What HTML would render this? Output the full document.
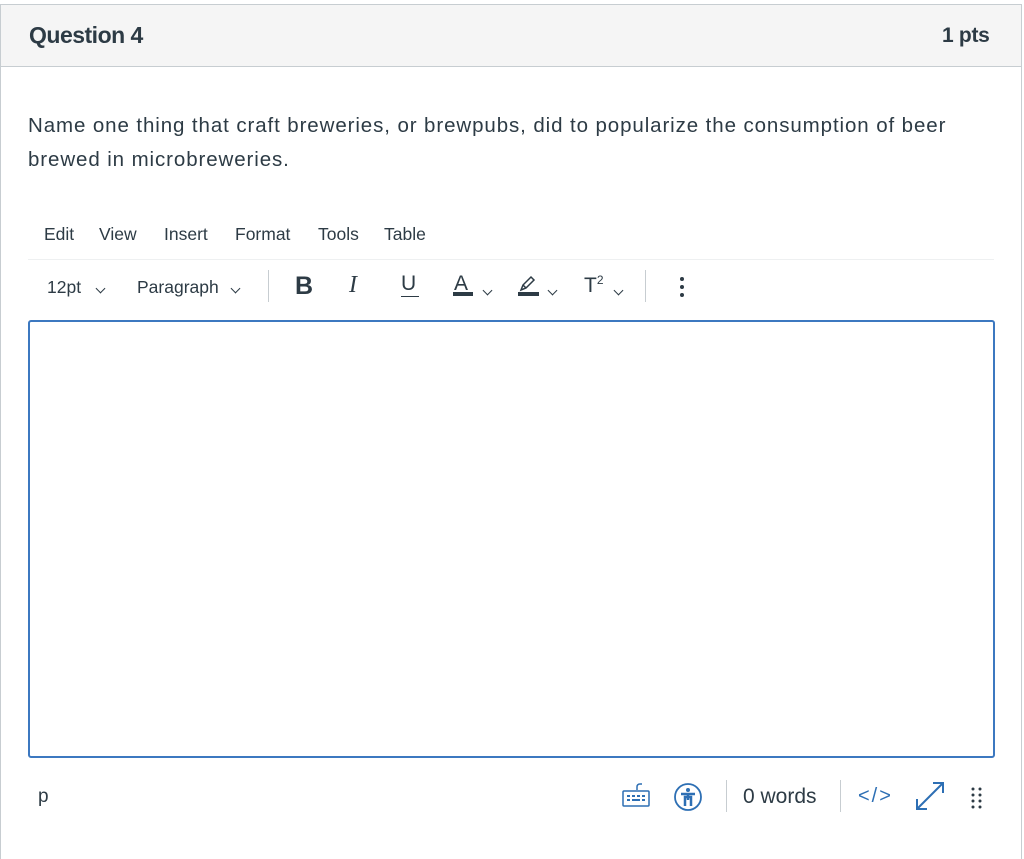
<!DOCTYPE html>
<html><head><meta charset="utf-8"><style>
*{margin:0;padding:0;box-sizing:border-box}
body{width:1024px;height:859px;background:#fff;font-family:"Liberation Sans",sans-serif;color:#2d3b45;position:relative;overflow:hidden}
.a{position:absolute;white-space:nowrap}
.chev{display:inline-block;width:7px;height:7px;border-right:1px solid #2d3b45;border-bottom:1px solid #2d3b45;transform:rotate(45deg);}
</style></head><body>
<div class="a" style="left:0;top:4px;width:1022px;height:855px;border:1px solid #c7cdd1;border-bottom:none"></div>
<div class="a" style="left:1px;top:5px;width:1020px;height:62px;background:#f5f5f5;border-bottom:1px solid #c7cdd1"></div>
<div class="a" style="left:29px;top:22px;font-size:23px;font-weight:bold;letter-spacing:-0.5px">Question 4</div>
<div class="a" style="left:942px;top:24px;font-size:21px;font-weight:bold;letter-spacing:-0.3px">1 pts</div>
<div class="a" style="left:28px;top:109px;font-size:20.5px;letter-spacing:0.9px;line-height:34px;white-space:normal;width:945px">Name one thing that craft breweries, or brewpubs, did to popularize the consumption of beer brewed in microbreweries.</div>
<div class="a" style="left:44px;top:224px;font-size:17.5px">Edit</div>
<div class="a" style="left:99px;top:224px;font-size:17.5px">View</div>
<div class="a" style="left:164px;top:224px;font-size:17.5px">Insert</div>
<div class="a" style="left:235px;top:224px;font-size:17.5px">Format</div>
<div class="a" style="left:318px;top:224px;font-size:17.5px">Tools</div>
<div class="a" style="left:384px;top:224px;font-size:17.5px">Table</div>
<div class="a" style="left:28px;top:259px;width:966px;height:1px;background:#eef0f1"></div>
<div class="a" style="left:47px;top:277px;font-size:17.5px">12pt</div>
<div class="a" style="left:97px;top:279px"><span class="chev"></span></div>
<div class="a" style="left:137px;top:277px;font-size:17.5px">Paragraph</div>
<div class="a" style="left:232px;top:279px"><span class="chev"></span></div>
<div class="a" style="left:268px;top:270px;width:1px;height:32px;background:#c7cdd1"></div>
<div class="a" style="left:295px;top:272px;font-size:25px;font-weight:bold">B</div>
<div class="a" style="left:349px;top:272px;font-size:24px;font-family:'Liberation Serif',serif;font-style:italic">I</div>
<div class="a" style="left:401px;top:272px;font-size:21px">U</div>
<div class="a" style="left:401px;top:296px;width:18px;height:1px;background:#2d3b45"></div>
<div class="a" style="left:454px;top:272px;font-size:21px">A</div>
<div class="a" style="left:453px;top:292px;width:20px;height:4px;background:#2d3b45"></div>
<div class="a" style="left:484px;top:281px"><span class="chev"></span></div>
<svg class="a" style="left:517px;top:274px" width="24" height="24"><path d="M4 16 L6 11 L14 3 L17 6 L9 14 Z M6 11 L9 14" fill="none" stroke="#2d3b45" stroke-width="1.5"/><rect x="1" y="18" width="21" height="4" fill="#2d3b45"/></svg>
<div class="a" style="left:549px;top:281px"><span class="chev"></span></div>
<div class="a" style="left:584px;top:273px;font-size:21px">T<sup style="font-size:12px">2</sup></div>
<div class="a" style="left:615px;top:281px"><span class="chev"></span></div>
<div class="a" style="left:645px;top:270px;width:1px;height:32px;background:#c7cdd1"></div>
<svg class="a" style="left:679px;top:276px" width="6" height="22"><circle cx="3" cy="3" r="2" fill="#2d3b45"/><circle cx="3" cy="11" r="2" fill="#2d3b45"/><circle cx="3" cy="19" r="2" fill="#2d3b45"/></svg>
<div class="a" style="left:28px;top:320px;width:967px;height:438px;border:2px solid #3c78c0;border-radius:3px"></div>
<div class="a" style="left:38px;top:786px;font-size:19px">p</div>
<svg class="a" style="left:622px;top:782px" width="30" height="26" fill="none" stroke="#2d6fb4" stroke-width="1.5"><path d="M15 8 V5 Q15 2 18 2 H20"/><rect x="1" y="9" width="26" height="15" rx="1"/><g fill="#2d6fb4" stroke="none"><rect x="5" y="13" width="3" height="2"/><rect x="10" y="13" width="3" height="2"/><rect x="15" y="13" width="3" height="2"/><rect x="20" y="13" width="3" height="2"/><rect x="5" y="17" width="3" height="2"/><rect x="10" y="17" width="8" height="2"/><rect x="20" y="17" width="3" height="2"/></g></svg>
<svg class="a" style="left:673px;top:782px" width="30" height="30"><circle cx="15" cy="15" r="13" fill="none" stroke="#2d6fb4" stroke-width="1.8"/><circle cx="15" cy="8" r="2" fill="#2d6fb4"/><path d="M8 12 H22 M15 11 V18 M12 24 V15 H18 V24" stroke="#2d6fb4" stroke-width="2.5" fill="none"/></svg>
<div class="a" style="left:726px;top:780px;width:1px;height:32px;background:#c7cdd1"></div>
<div class="a" style="left:743px;top:785px;font-size:21px">0 words</div>
<div class="a" style="left:840px;top:780px;width:1px;height:32px;background:#c7cdd1"></div>
<div class="a" style="left:858px;top:785px;font-size:20px;color:#2d6fb4;letter-spacing:2px">&lt;/&gt;</div>
<svg class="a" style="left:914px;top:780px" width="32" height="32" stroke="#2d6fb4" stroke-width="2" fill="none"><path d="M3 29 L29 3 M19 3 H29 V13 M3 19 V29 H13"/></svg>
<svg class="a" style="left:971px;top:787px" width="12" height="22" fill="#2d3b45"><circle cx="2" cy="2" r="1.5"/><circle cx="9" cy="2" r="1.5"/><circle cx="2" cy="8" r="1.5"/><circle cx="9" cy="8" r="1.5"/><circle cx="2" cy="14" r="1.5"/><circle cx="9" cy="14" r="1.5"/><circle cx="2" cy="20" r="1.5"/><circle cx="9" cy="20" r="1.5"/></svg>
</body></html>
